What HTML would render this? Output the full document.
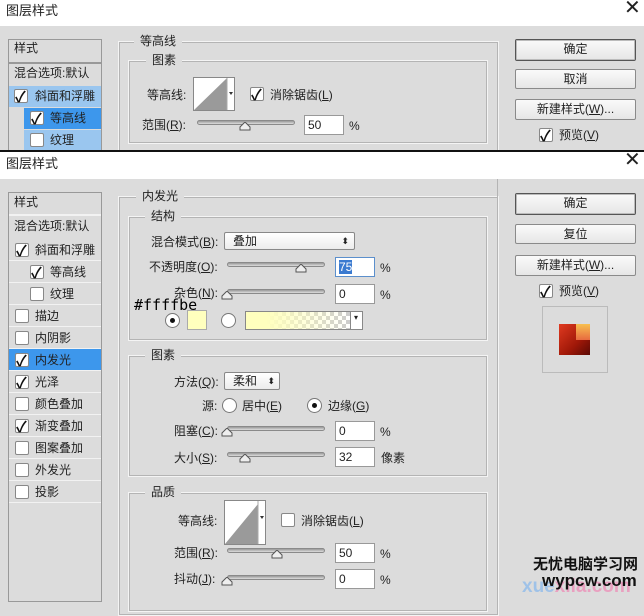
<!DOCTYPE html>
<html><head><meta charset="utf-8"><style>
*{box-sizing:border-box;margin:0;padding:0}
body{width:644px;height:594px;overflow:hidden;background:#dcdcdc;position:relative;font-family:"Liberation Sans","Noto Sans CJK SC",sans-serif;font-size:12px;color:#222}
.a{position:absolute}
.t{position:absolute;white-space:nowrap;line-height:14px}
.tb{position:absolute;left:0;width:644px;background:#fff}
.cb{position:absolute;width:14px;height:14px;background:#fff;border:1px solid #888;border-radius:2px}
.cb.c::after{content:"✓";position:absolute;left:0;top:-4px;font-size:15px;font-weight:bold;color:#111}
.row{position:absolute;left:9px;width:92px;height:22px;border-bottom:1px solid #f2f2f2}
.btn{position:absolute;background:linear-gradient(#fafafa,#e6e6e6);border:1px solid #8a8a8a;border-radius:2px;text-align:center;line-height:19px;font-size:12px}
.fs{position:absolute;border:1px solid #f4f4f4;outline:1px solid #b4b4b4;outline-offset:-2px}
.lg{position:absolute;background:#dcdcdc;padding:0 6px;line-height:14px}
.sl{position:absolute;height:5px;background:linear-gradient(#999,#ddd);border:1px solid #8a8a8a;border-radius:3px}
.th{position:absolute;width:12px;height:9px}
.in{position:absolute;width:40px;height:20px;background:#fff;border:1px solid #999;padding:3px 3px;font-size:12px;line-height:13px}
.rd{position:absolute;width:15px;height:15px;border-radius:50%;background:#fff;border:1px solid #777}
.rd.s::after{content:"";position:absolute;left:4px;top:4px;width:5px;height:5px;border-radius:50%;background:#111}
.dd{position:absolute;background:linear-gradient(#fff,#ececec);border:1px solid #888;border-radius:2px;padding-left:8px;line-height:16px}
</style></head><body>
<!-- Dialog 1 -->
<div class="tb" style="top:0;height:26px"></div>
<div class="t" style="left:6px;top:4px;font-size:13px">图层样式</div>
<div class="t" style="left:624px;top:1px;font-size:20px;font-weight:300">✕</div>
<div class="a" style="left:8px;top:39px;width:94px;height:112px;border:1px solid #999;border-bottom:none;background:#dcdcdc"></div>
<div class="t" style="left:14px;top:41px">样式</div>
<div class="a" style="left:9px;top:62px;width:92px;height:2px;background:#999"></div>
<div class="t" style="left:14px;top:66px">混合选项:默认</div>
<div class="a" style="left:9px;top:86px;width:92px;height:21px;background:#9ac6ef"></div>
<div class="cb c" style="left:14px;top:89px"></div><div class="t" style="left:35px;top:89px">斜面和浮雕</div>
<div class="a" style="left:24px;top:108px;width:77px;height:21px;background:#3d97ec"></div>
<div class="cb c" style="left:30px;top:111px"></div><div class="t" style="left:50px;top:111px">等高线</div>
<div class="a" style="left:24px;top:130px;width:77px;height:21px;background:#9ac6ef"></div>
<div class="cb" style="left:30px;top:133px"></div><div class="t" style="left:50px;top:133px">纹理</div>
<div class="fs" style="left:118px;top:41px;width:381px;height:120px"></div>
<div class="lg" style="left:134px;top:34px">等高线</div>
<div class="fs" style="left:128px;top:60px;width:360px;height:84px"></div>
<div class="lg" style="left:146px;top:53px">图素</div>
<div class="t" style="left:147px;top:88px">等高线:</div>
<div class="a" style="left:193px;top:77px;width:42px;height:34px;background:#fff;border:1px solid #888"><svg width="40" height="32"><polygon points="0,32 33,0 33,32" fill="#9a9a9a"/><line x1="33" y1="0" x2="33" y2="32" stroke="#aaa"/><polygon points="35,14 39,14 37,17" fill="#333"/></svg></div>
<div class="cb c" style="left:250px;top:87px"></div><div class="t" style="left:270px;top:88px">消除锯齿(<u>L</u>)</div>
<div class="t" style="left:142px;top:118px">范围(<u>R</u>):</div>
<div class="sl" style="left:197px;top:120px;width:98px"></div>
<svg class="th" style="left:239px;top:122px" viewBox="0 0 12 9"><polygon points="6,0 11,5 11,8 1,8 1,5" fill="#eee" stroke="#555"/></svg>
<div class="in" style="left:304px;top:115px">50</div><div class="t" style="left:349px;top:119px">%</div>
<div class="btn" style="left:515px;top:39px;width:121px;height:22px;border-color:#555;box-shadow:0 0 0 1px #bbb inset">确定</div>
<div class="btn" style="left:515px;top:69px;width:121px;height:20px">取消</div>
<div class="btn" style="left:515px;top:99px;width:121px;height:21px">新建样式(<u>W</u>)...</div>
<div class="cb c" style="left:539px;top:128px"></div><div class="t" style="left:559px;top:128px">预览(<u>V</u>)</div>
<div class="a" style="left:0;top:150px;width:644px;height:2px;background:#111"></div>
<!-- Dialog 2 -->
<div class="tb" style="top:152px;height:27px"></div>
<div class="t" style="left:6px;top:157px;font-size:13px">图层样式</div>
<div class="t" style="left:624px;top:153px;font-size:20px;font-weight:300">✕</div>
<div class="a" style="left:8px;top:192px;width:94px;height:410px;border:1px solid #999"></div>
<div class="t" style="left:14px;top:195px">样式</div>
<div class="a" style="left:9px;top:214px;width:92px;height:2px;background:#f2f2f2"></div>
<div class="t" style="left:14px;top:219px">混合选项:默认</div>
<div class="row" style="top:239px"></div><div class="cb c" style="left:15px;top:243px"></div><div class="t" style="left:35px;top:243px">斜面和浮雕</div>
<div class="row" style="top:261px"></div><div class="cb c" style="left:30px;top:265px"></div><div class="t" style="left:50px;top:265px">等高线</div>
<div class="row" style="top:283px"></div><div class="cb" style="left:30px;top:287px"></div><div class="t" style="left:50px;top:287px">纹理</div>
<div class="row" style="top:305px"></div><div class="cb" style="left:15px;top:309px"></div><div class="t" style="left:35px;top:309px">描边</div>
<div class="row" style="top:327px"></div><div class="cb" style="left:15px;top:331px"></div><div class="t" style="left:35px;top:331px">内阴影</div>
<div class="row" style="top:349px;background:#3d97ec"></div><div class="cb c" style="left:15px;top:353px"></div><div class="t" style="left:35px;top:353px">内发光</div>
<div class="row" style="top:371px"></div><div class="cb c" style="left:15px;top:375px"></div><div class="t" style="left:35px;top:375px">光泽</div>
<div class="row" style="top:393px"></div><div class="cb" style="left:15px;top:397px"></div><div class="t" style="left:35px;top:397px">颜色叠加</div>
<div class="row" style="top:415px"></div><div class="cb c" style="left:15px;top:419px"></div><div class="t" style="left:35px;top:419px">渐变叠加</div>
<div class="row" style="top:437px"></div><div class="cb" style="left:15px;top:441px"></div><div class="t" style="left:35px;top:441px">图案叠加</div>
<div class="row" style="top:459px"></div><div class="cb" style="left:15px;top:463px"></div><div class="t" style="left:35px;top:463px">外发光</div>
<div class="row" style="top:481px"></div><div class="cb" style="left:15px;top:485px"></div><div class="t" style="left:35px;top:485px">投影</div>

<div class="fs" style="left:118px;top:196px;width:381px;height:420px"></div>
<div class="lg" style="left:136px;top:189px">内发光</div>
<div class="fs" style="left:128px;top:216px;width:360px;height:125px"></div>
<div class="lg" style="left:145px;top:209px">结构</div>
<div class="t" style="left:151px;top:235px">混合模式(<u>B</u>):</div>
<div class="dd" style="left:224px;top:232px;width:131px;height:18px">叠加<span style="position:absolute;right:5px;top:0;font-size:9px">⬍</span></div>
<div class="t" style="left:149px;top:260px">不透明度(<u>O</u>):</div>
<div class="sl" style="left:227px;top:262px;width:98px"></div>
<svg class="th" style="left:295px;top:264px" viewBox="0 0 12 9"><polygon points="6,0 11,5 11,8 1,8 1,5" fill="#eee" stroke="#555"/></svg>
<div class="in" style="left:335px;top:257px;border-color:#5b8fcc"><span style="background:#3a7ad0;color:#fff">75</span></div><div class="t" style="left:380px;top:261px">%</div>
<div class="t" style="left:174px;top:286px">杂色(<u>N</u>):</div>
<div class="sl" style="left:227px;top:289px;width:98px"></div>
<svg class="th" style="left:221px;top:291px" viewBox="0 0 12 9"><polygon points="6,0 11,5 11,8 1,8 1,5" fill="#eee" stroke="#555"/></svg>
<div class="in" style="left:335px;top:284px">0</div><div class="t" style="left:380px;top:288px">%</div>
<div class="t" style="left:134px;top:298px;font-family:'DejaVu Sans Mono','Liberation Mono',monospace;font-size:15px;color:#000">#ffffbe</div>
<div class="rd s" style="left:165px;top:313px"></div>
<div class="a" style="left:187px;top:310px;width:20px;height:20px;background:#ffffbe;border:1px solid #aaa"></div>
<div class="rd" style="left:221px;top:313px"></div>
<div class="a" style="left:245px;top:311px;width:118px;height:19px;border:1px solid #888;background:#fff"><div style="position:absolute;left:0;top:0;width:104px;height:17px;background:linear-gradient(90deg,#ffffbe 20%,rgba(255,255,190,0)),repeating-conic-gradient(#ccc 0 25%,#fff 0 50%) 0 0/8px 8px"></div><div style="position:absolute;left:104px;top:0;width:1px;height:17px;background:#888"></div><div style="position:absolute;left:108px;top:1px;font-size:8px">▾</div></div>

<div class="fs" style="left:128px;top:355px;width:360px;height:122px"></div>
<div class="lg" style="left:145px;top:348px">图素</div>
<div class="t" style="left:174px;top:375px">方法(<u>Q</u>):</div>
<div class="dd" style="left:224px;top:372px;width:56px;height:18px">柔和<span style="position:absolute;right:4px;top:0;font-size:9px">⬍</span></div>
<div class="t" style="left:202px;top:399px">源:</div>
<div class="rd" style="left:222px;top:398px"></div><div class="t" style="left:242px;top:399px">居中(<u>E</u>)</div>
<div class="rd s" style="left:307px;top:398px"></div><div class="t" style="left:328px;top:399px">边缘(<u>G</u>)</div>
<div class="t" style="left:174px;top:424px">阻塞(<u>C</u>):</div>
<div class="sl" style="left:227px;top:426px;width:98px"></div>
<svg class="th" style="left:221px;top:428px" viewBox="0 0 12 9"><polygon points="6,0 11,5 11,8 1,8 1,5" fill="#eee" stroke="#555"/></svg>
<div class="in" style="left:335px;top:421px">0</div><div class="t" style="left:380px;top:425px">%</div>
<div class="t" style="left:174px;top:451px">大小(<u>S</u>):</div>
<div class="sl" style="left:227px;top:452px;width:98px"></div>
<svg class="th" style="left:239px;top:454px" viewBox="0 0 12 9"><polygon points="6,0 11,5 11,8 1,8 1,5" fill="#eee" stroke="#555"/></svg>
<div class="in" style="left:335px;top:447px">32</div><div class="t" style="left:381px;top:451px">像素</div>

<div class="fs" style="left:128px;top:492px;width:360px;height:120px"></div>
<div class="lg" style="left:145px;top:485px">品质</div>
<div class="t" style="left:178px;top:514px">等高线:</div>
<div class="a" style="left:224px;top:500px;width:42px;height:45px;background:#fff;border:1px solid #888"><svg width="40" height="43"><polygon points="0,43 33,3 33,43" fill="#9a9a9a"/><line x1="33" y1="0" x2="33" y2="43" stroke="#aaa"/><polygon points="35,15 39,15 37,18" fill="#333"/></svg></div>
<div class="cb" style="left:281px;top:513px"></div><div class="t" style="left:301px;top:514px">消除锯齿(<u>L</u>)</div>
<div class="t" style="left:174px;top:546px">范围(<u>R</u>):</div>
<div class="sl" style="left:227px;top:548px;width:98px"></div>
<svg class="th" style="left:271px;top:550px" viewBox="0 0 12 9"><polygon points="6,0 11,5 11,8 1,8 1,5" fill="#eee" stroke="#555"/></svg>
<div class="in" style="left:335px;top:543px">50</div><div class="t" style="left:380px;top:547px">%</div>
<div class="t" style="left:174px;top:572px">抖动(<u>J</u>):</div>
<div class="sl" style="left:227px;top:575px;width:98px"></div>
<svg class="th" style="left:221px;top:577px" viewBox="0 0 12 9"><polygon points="6,0 11,5 11,8 1,8 1,5" fill="#eee" stroke="#555"/></svg>
<div class="in" style="left:335px;top:569px">0</div><div class="t" style="left:380px;top:573px">%</div>

<div class="a" style="left:497px;top:179px;width:1px;height:420px;background:#b4b4b4"></div>
<div class="btn" style="left:515px;top:193px;width:121px;height:22px;border-color:#555;box-shadow:0 0 0 1px #bbb inset">确定</div>
<div class="btn" style="left:515px;top:224px;width:121px;height:20px">复位</div>
<div class="btn" style="left:515px;top:255px;width:121px;height:21px">新建样式(<u>W</u>)...</div>
<div class="cb c" style="left:539px;top:284px"></div><div class="t" style="left:559px;top:284px">预览(<u>V</u>)</div>
<div class="a" style="left:542px;top:306px;width:66px;height:67px;border:1px solid #bbb"></div>
<div class="a" style="left:559px;top:324px;width:31px;height:31px;background:linear-gradient(135deg,#e03a20,#a01808 60%,#5a0a05);"><div style="position:absolute;right:0;top:0;width:14px;height:16px;background:linear-gradient(#f8c050,#e86a40)"></div></div>

<div class="t" style="left:522px;top:578px;font-size:19px;font-weight:bold;color:#9fc2e8;line-height:18px">xue<span style="color:#e9a0c0">xila.com</span></div>
<div class="t" style="left:533px;top:557px;font-size:15px;font-weight:bold;color:#111;line-height:16px">无忧电脑学习网</div>
<div class="t" style="left:542px;top:572px;font-size:17px;font-weight:bold;color:#111;line-height:17px">wypcw.com</div>
</body></html>
